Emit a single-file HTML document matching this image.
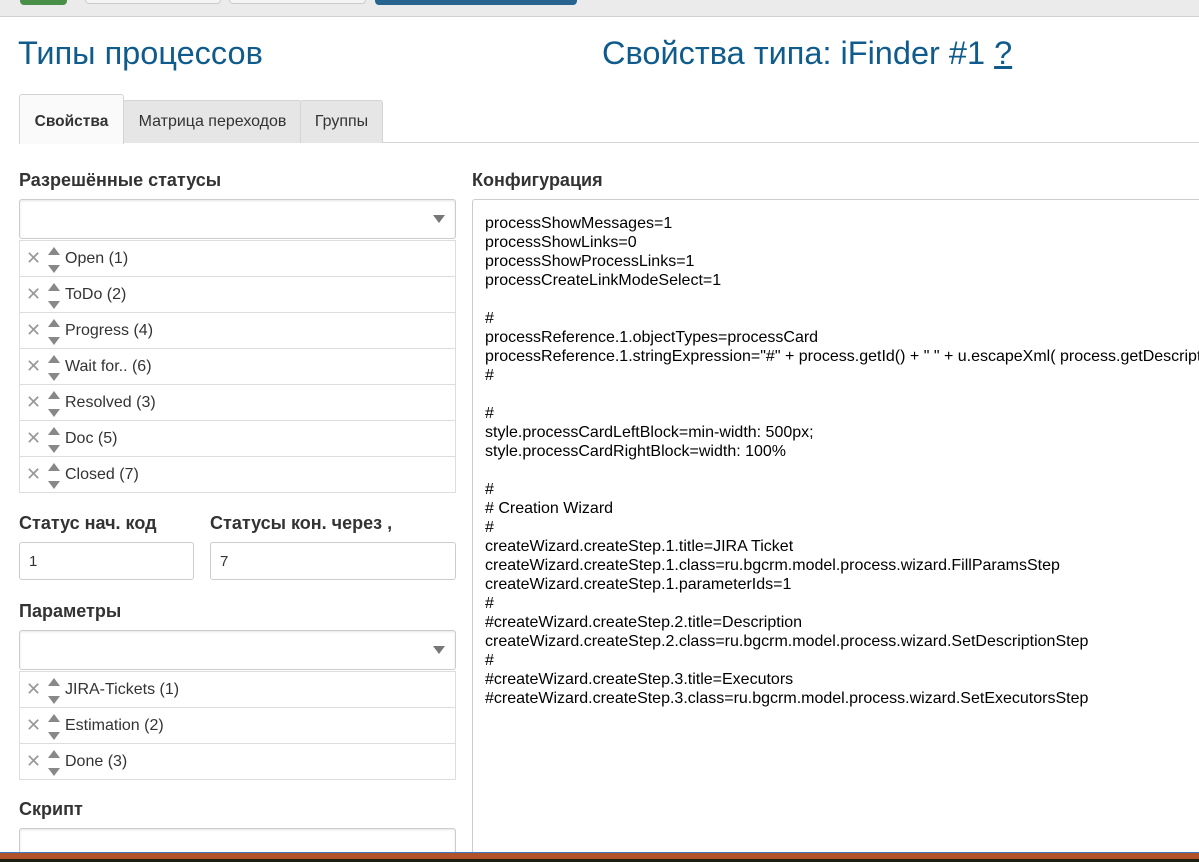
<!DOCTYPE html><html style="overflow:hidden;height:862px"><head><meta charset="utf-8"><style>
body{margin:0;width:1199px;height:862px;overflow:hidden;background:#fff;font-family:"Liberation Sans",Arial,sans-serif;position:relative;color:#333}
.a{position:absolute}
.top{left:0;top:0;width:1199px;height:16px;background:#ebebeb;border-bottom:1px solid #d0d0d0}
h1{position:absolute;margin:0;font-weight:normal;font-size:32.5px;color:#0f5b8c}
.tab{position:absolute;top:100px;height:42px;line-height:42px;font-size:16px;background:#e6e6e6;border:1px solid #d4d4d4;border-bottom:none;text-align:center;border-radius:3px 3px 0 0}
.lbl{position:absolute;font-weight:bold;font-size:18px;color:#333}
.sel{position:absolute;left:19px;width:435px;height:38px;border:1px solid #ccc;border-radius:3px;box-shadow:inset 0 1px 2px rgba(0,0,0,.1)}
.sel.ar:after{content:"";position:absolute;right:10px;top:15px;border:6px solid transparent;border-top:8px solid #777;border-bottom:none}
.row{position:absolute;left:19px;width:435px;height:35px;border:1px solid #ddd;border-top:none;font-size:16px;line-height:35px}
.row .x{position:absolute;left:6px;top:0;color:#999;font-size:18px}
.row .u{position:absolute;left:28px;top:6px;border:6px solid transparent;border-bottom:8px solid #888;border-top:none}
.row .d{position:absolute;left:28px;top:24px;border:6px solid transparent;border-top:8px solid #888;border-bottom:none}
.row .t{position:absolute;left:45px}
.inp{position:absolute;height:38px;border:1px solid #ccc;border-radius:3px;font-size:15px;line-height:38px;padding-left:9px;box-sizing:border-box}
pre{position:absolute;left:472px;top:199px;width:800px;height:700px;margin:0;border:1px solid #ccc;border-radius:3px;font-family:"Liberation Sans",Arial,sans-serif;font-size:16px;line-height:19px;padding:14px 12px;box-sizing:border-box;color:#000}
</style></head><body>
<div class="a top"></div>
<div class="a" style="left:20px;top:0;width:47px;height:5px;background:#4a8f47;border-radius:0 0 4px 4px"></div>
<div class="a" style="left:85px;top:0;width:134px;height:3px;border:1px solid #ccc;border-top:none;background:#f4f4f4;border-radius:0 0 4px 4px"></div>
<div class="a" style="left:229px;top:0;width:135px;height:3px;border:1px solid #ccc;border-top:none;background:#f4f4f4;border-radius:0 0 4px 4px"></div>
<div class="a" style="left:375px;top:0;width:202px;height:5px;background:#276590;border-radius:0 0 4px 4px"></div>
<h1 style="left:18px;top:35px">Типы процессов</h1>
<h1 style="left:602px;top:35px">Свойства типа: iFinder #1 <span style="text-decoration:underline">?</span></h1>
<div class="a" style="left:19px;top:142px;width:1180px;height:1px;background:#d4d4d4"></div>
<div class="tab" style="left:19px;top:94px;height:49px;line-height:54px;width:103px;background:#fafafa;font-weight:bold;font-size:15.5px">Свойства</div>
<div class="tab" style="left:123px;width:177px">Матрица переходов</div>
<div class="tab" style="left:300px;width:81px">Группы</div>
<div class="lbl" style="left:19px;top:170px">Разрешённые статусы</div>
<div class="lbl" style="left:472px;top:170px">Конфигурация</div>
<div class="sel ar" style="top:199px"></div>
<div class="row" style="top:240px;border-top:1px solid #ddd;height:35px"><span class="x">✕</span><span class="u"></span><span class="d"></span><span class="t">Open (1)</span></div>
<div class="row" style="top:277px"><span class="x">✕</span><span class="u"></span><span class="d"></span><span class="t">ToDo (2)</span></div>
<div class="row" style="top:313px"><span class="x">✕</span><span class="u"></span><span class="d"></span><span class="t">Progress (4)</span></div>
<div class="row" style="top:349px"><span class="x">✕</span><span class="u"></span><span class="d"></span><span class="t">Wait for.. (6)</span></div>
<div class="row" style="top:385px"><span class="x">✕</span><span class="u"></span><span class="d"></span><span class="t">Resolved (3)</span></div>
<div class="row" style="top:421px"><span class="x">✕</span><span class="u"></span><span class="d"></span><span class="t">Doc (5)</span></div>
<div class="row" style="top:457px"><span class="x">✕</span><span class="u"></span><span class="d"></span><span class="t">Closed (7)</span></div>
<div class="lbl" style="left:19px;top:513px">Статус нач. код</div>
<div class="lbl" style="left:210px;top:513px">Статусы кон. через ,</div>
<div class="inp" style="left:19px;top:542px;width:175px">1</div>
<div class="inp" style="left:210px;top:542px;width:246px">7</div>
<div class="lbl" style="left:19px;top:601px">Параметры</div>
<div class="sel ar" style="top:630px"></div>
<div class="row" style="top:671px;border-top:1px solid #ddd"><span class="x">✕</span><span class="u"></span><span class="d"></span><span class="t">JIRA-Tickets (1)</span></div>
<div class="row" style="top:708px"><span class="x">✕</span><span class="u"></span><span class="d"></span><span class="t">Estimation (2)</span></div>
<div class="row" style="top:744px"><span class="x">✕</span><span class="u"></span><span class="d"></span><span class="t">Done (3)</span></div>
<div class="lbl" style="left:19px;top:799px">Скрипт</div>
<div class="sel" style="top:828px;height:40px"></div>
<pre>processShowMessages=1
processShowLinks=0
processShowProcessLinks=1
processCreateLinkModeSelect=1

#
processReference.1.objectTypes=processCard
processReference.1.stringExpression="#" + process.getId() + " " + u.escapeXml( process.getDescription() )
#

#
style.processCardLeftBlock=min-width: 500px;
style.processCardRightBlock=width: 100%

#
# Creation Wizard
#
createWizard.createStep.1.title=JIRA Ticket
createWizard.createStep.1.class=ru.bgcrm.model.process.wizard.FillParamsStep
createWizard.createStep.1.parameterIds=1
#
#createWizard.createStep.2.title=Description
createWizard.createStep.2.class=ru.bgcrm.model.process.wizard.SetDescriptionStep
#
#createWizard.createStep.3.title=Executors
#createWizard.createStep.3.class=ru.bgcrm.model.process.wizard.SetExecutorsStep</pre>
<div class="a" style="left:0;top:852px;width:1199px;height:1px;background:#3a7bbf"></div>
<div class="a" style="left:0;top:853px;width:1199px;height:6px;background:#b0522a"></div>
<div class="a" style="left:0;top:859px;width:1199px;height:3px;background:#1e1e10"></div>
</body></html>
